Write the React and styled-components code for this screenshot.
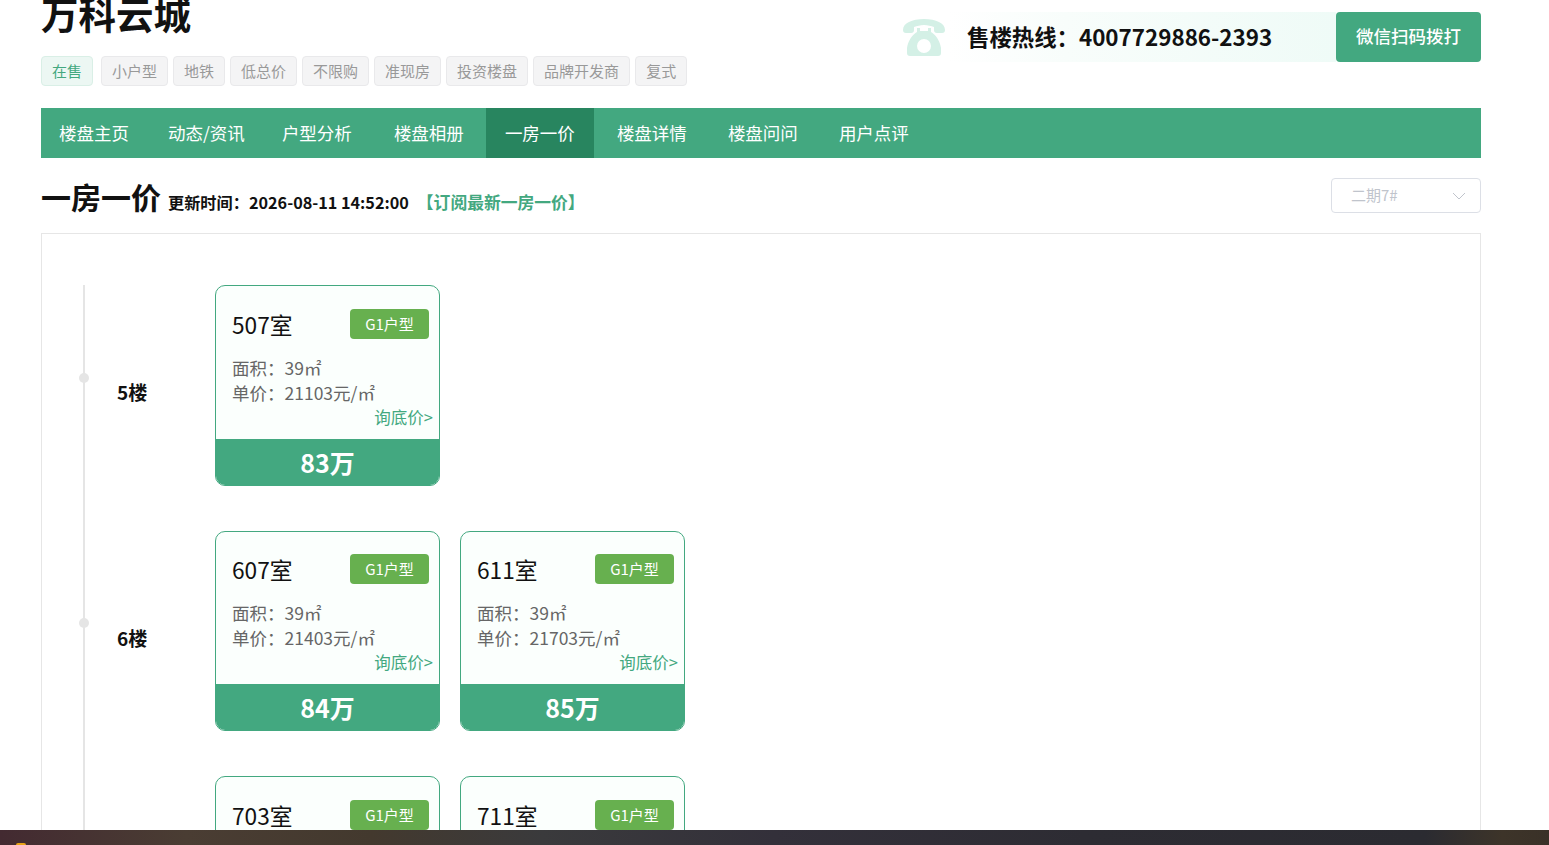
import React from "react";
import styled, { createGlobalStyle } from "styled-components";

const Global = createGlobalStyle`
  html, body { margin: 0; padding: 0; background: #fff; }
  body { font-family: "Noto Sans CJK SC", "Noto Sans", sans-serif; color: #111; }
  * { box-sizing: border-box; }
`;
const Page = styled.div`
  height: 845px; width: 1549px; overflow: hidden; display: flex; flex-direction: column;
`;
const Main = styled.main`
  height: 830px; overflow: hidden; padding: 0 68px 0 41px;
`;
const Header = styled.header`
  display: flex; justify-content: space-between; align-items: flex-start; height: 108px;
`;
const HeaderLeft = styled.div`
  display: flex; flex-direction: column;
`;
const Title = styled.h1`
  margin: -14px 0 0; font-size: 37.5px; line-height: 54px; font-weight: 700; color: #111; white-space: nowrap;
`;
const Tags = styled.div`
  display: flex; gap: 5px; margin-top: 16px;
`;
const Tag = styled.span`
  height: 30px; padding: 0 10px; font-size: 15px; line-height: 27px; border-radius: 4px;
  color: ${p => (p.$on ? "#43a880" : "#999")};
  background: ${p => (p.$on ? "#ecf7f3" : "#f4f4f5")};
  border: 1px solid ${p => (p.$on ? "#d9efe6" : "#e9e9eb")};
  margin-right: ${p => (p.$on ? "3px" : "0")};
`;
const Hotline = styled.div`
  display: flex; align-items: center; margin-top: 12px; height: 50px;
`;
const PhoneIcon = styled.svg`
  width: 44px; height: 38px; margin-right: 3px; flex: none;
`;
const HotText = styled.div`
  width: 387px; height: 50px; padding-left: 18px; font-size: 22.4px; font-weight: 700; line-height: 48px;
  color: #111; background: linear-gradient(90deg, #fff 0%, #f8fdfb 30%, #effbf7 100%);
  white-space: nowrap;
`;
const CallButton = styled.button`
  width: 145px; height: 50px; border: 0; border-radius: 4px; background: #43a880; color: #fff;
  font: 500 17.5px/46px "Noto Sans CJK SC", sans-serif; padding: 0 0 3px;
`;
const Nav = styled.nav`
  display: flex; height: 50px; background: #43a880;
`;
const NavItem = styled.a`
  height: 50px; line-height: 49px; padding: 0 19px; font-size: 17.5px; color: #fff; white-space: nowrap;
  margin-right: ${p => p.$gap}px;
  background: ${p => (p.$on ? "#28855f" : "transparent")};
  &:first-child { margin-left: -1px; }
`;
const Head = styled.div`
  display: flex; align-items: flex-start; height: 75px; position: relative;
`;
const HeadTitle = styled.h2`
  margin: 16px 7px 0 0; font-size: 30px; line-height: 44px; font-weight: 700; color: #111; white-space: nowrap;
`;
const Updated = styled.span`
  margin-top: 32px; font-size: 16.2px; line-height: 24px; font-weight: 700; color: #111; white-space: nowrap;
`;
const Subscribe = styled.a`
  margin: 32px 0 0 8px; font-size: 16.8px; line-height: 24px; font-weight: 700; color: #43a880; white-space: nowrap;
`;
const Select = styled.div`
  margin: 20px 0 0 auto; width: 150px; height: 35px; border: 1px solid #dcdfe6; border-radius: 4px;
  display: flex; align-items: center; justify-content: space-between; padding: 0 14px 0 19px;
  font-size: 15px; color: #c0c4cc; background: #fff;
`;
const SelectText = styled.span`
  margin-bottom: 3px;
`;
const Panel = styled.section`
  border: 1px solid #e6e6e6; padding: 51px 0 0 41px; height: 700px;
`;
const Floors = styled.div`
  border-left: 2px solid #e5e5e5; display: flex; flex-direction: column; gap: 45px; padding-bottom: 100px;
`;
const Floor = styled.div`
  position: relative; display: flex; align-items: center; height: 200.5px; padding-left: 32px;
`;
const Dot = styled.i`
  position: absolute; left: -6px; top: 87.5px; width: 10px; height: 10px; border-radius: 50%; background: #e5e5e5;
`;
const FloorLabel = styled.div`
  width: 98px; flex: none; font-size: 19px; line-height: 26px; font-weight: 700; color: #111; margin-top: 14px;
`;
const Rooms = styled.div`
  display: flex; gap: 20px;
`;
const Card = styled.div`
  width: 225px; height: 200.5px; border: 1px solid #43a880; border-radius: 10px; overflow: hidden;
  background: #fbfffd; display: flex; flex-direction: column;
`;
const CardBody = styled.div`
  flex: 1; padding: 22.5px 6px 0 16px; display: flex; flex-direction: column;
`;
const CardTop = styled.div`
  display: flex; justify-content: space-between; align-items: center; padding-right: 4px; height: 30px; margin-bottom: 16px;
`;
const Room = styled.div`
  font-size: 22.7px; line-height: 30px; color: #111; padding-top: 2px;
`;
const Badge = styled.span`
  width: 79px; height: 30px; border-radius: 4px; background: #67b04f; color: #fff;
  font-size: 15px; line-height: 29px; text-align: center;
`;
const Info = styled.div`
  font-size: 17.5px; line-height: 25px; color: #666; white-space: nowrap;
`;
const Ask = styled.a`
  align-self: flex-end; font-size: 16.5px; line-height: 25px; color: #43a880;
`;
const Price = styled.div`
  height: 46px; background: #43a880; color: #fff; font-size: 25px; font-weight: 700; line-height: 47px; text-align: center;
`;
const Taskbar = styled.footer`
  height: 15px; flex: none; position: relative;
  background: linear-gradient(90deg, #432a31 0%, #4a3d33 12%, #43392e 24%, #3a3a3c 35%, #33303a 50%, #2d2c33 70%, #2b2b31 92%, #3d3429 97%, #3a3128 100%);
`;
const TaskMark = styled.i`
  position: absolute; left: 16px; top: 13px; width: 10px; height: 2px; background: #e8a317; border-radius: 2px 2px 0 0;
`;

const tags = ["小户型", "地铁", "低总价", "不限购", "准现房", "投资楼盘", "品牌开发商", "复式"];
const nav = [
  ["楼盘主页", 1], ["动态/资讯", -1], ["户型分析", 4], ["楼盘相册", 3], ["一房一价", 4],
  ["楼盘详情", 3], ["楼盘问问", 3], ["用户点评", 0],
];
const floors = [
  { name: "5楼", rooms: [{ no: "507室", unit: "21103", total: "83万" }] },
  { name: "6楼", rooms: [{ no: "607室", unit: "21403", total: "84万" }, { no: "611室", unit: "21703", total: "85万" }] },
  { name: "7楼", rooms: [{ no: "703室", unit: "21403", total: "84万" }, { no: "711室", unit: "21703", total: "85万" }] },
];

export default function App() {
  return (
    <Page>
      <Global />
      <Main>
        <Header>
          <HeaderLeft>
            <Title>万科云城</Title>
            <Tags>
              <Tag $on>在售</Tag>
              {tags.map(t => <Tag key={t}>{t}</Tag>)}
            </Tags>
          </HeaderLeft>
          <Hotline>
            <PhoneIcon viewBox="0 0 44 38">
              <path fill="#d4f0e6" d="M1 12C1 5 10 1 22 1s21 4 21 11c0 2-1 3-3 3h-5c-2 0-3-1-3-3V9c-3-1-6-2-10-2s-7 1-10 2v3c0 2-1 3-3 3H4c-2 0-3-1-3-3Z" />
              <path fill="#d4f0e6" fillRule="evenodd" d="M15 10h3v3h8v-3h3v4c5 3 9 9 10 16v5c0 2-1 3-3 3H8c-2 0-3-1-3-3v-5c1-7 5-13 10-16v-4Zm7 11a7 7 0 1 0 0 14 7 7 0 0 0 0-14Z" />
            </PhoneIcon>
            <HotText>售楼热线：4007729886-2393</HotText>
            <CallButton>微信扫码拨打</CallButton>
          </Hotline>
        </Header>
        <Nav>
          {nav.map(([t, g]) => <NavItem key={t} $on={t === "一房一价"} $gap={g}>{t}</NavItem>)}
        </Nav>
        <Head>
          <HeadTitle>一房一价</HeadTitle>
          <Updated>更新时间：2026-08-11 14:52:00</Updated>
          <Subscribe>【订阅最新一房一价】</Subscribe>
          <Select>
            <SelectText>二期7#</SelectText>
            <svg width="14" height="8" viewBox="0 0 14 8" fill="none"><path d="M1 1l6 6 6-6" stroke="#c0c4cc" strokeWidth="1" /></svg>
          </Select>
        </Head>
        <Panel>
          <Floors>
            {floors.map(f => (
              <Floor key={f.name}>
                <Dot />
                <FloorLabel>{f.name}</FloorLabel>
                <Rooms>
                  {f.rooms.map(r => (
                    <Card key={r.no}>
                      <CardBody>
                        <CardTop>
                          <Room>{r.no}</Room>
                          <Badge>G1户型</Badge>
                        </CardTop>
                        <Info>面积：39㎡</Info>
                        <Info>单价：{r.unit}元/㎡</Info>
                        <Ask>询底价&gt;</Ask>
                      </CardBody>
                      <Price>{r.total}</Price>
                    </Card>
                  ))}
                </Rooms>
              </Floor>
            ))}
          </Floors>
        </Panel>
      </Main>
      <Taskbar><TaskMark /></Taskbar>
    </Page>
  );
}
